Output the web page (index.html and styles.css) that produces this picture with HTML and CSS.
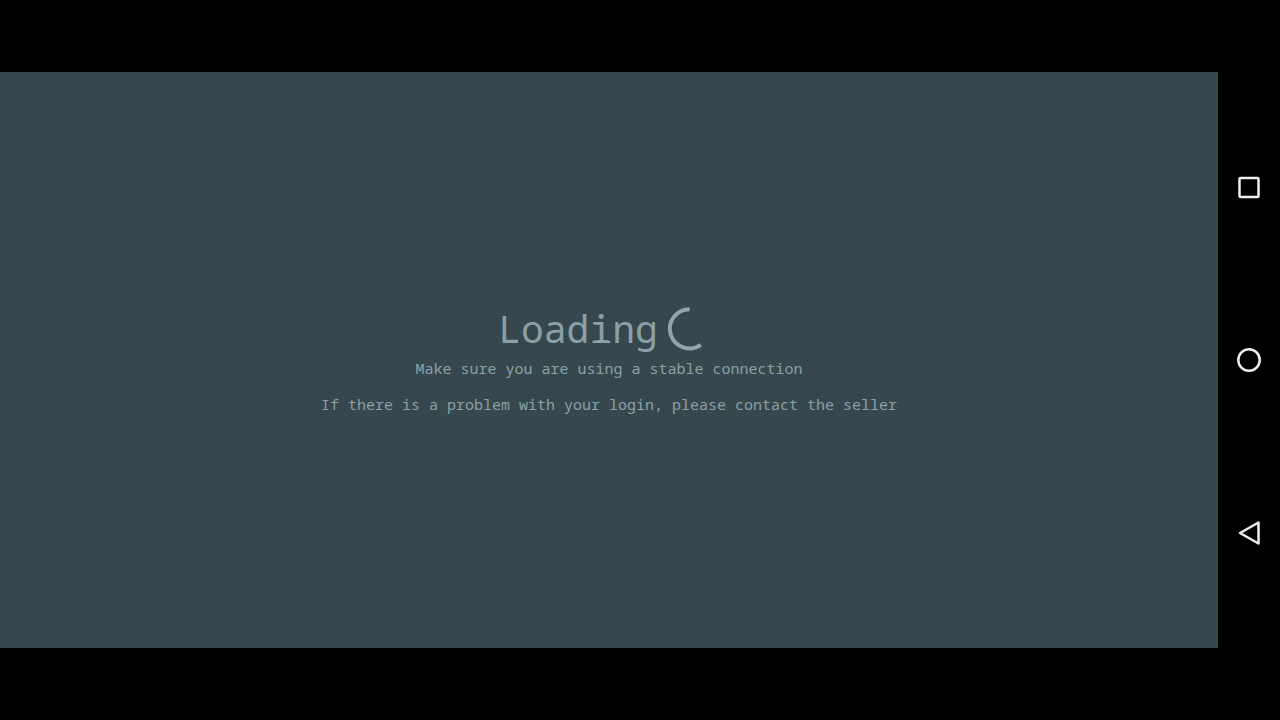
FILE: index.html
```html
<!DOCTYPE html>
<html lang="en">
<head>
<meta charset="utf-8">
<title>Loading</title>
<link rel="stylesheet" href="styles.css">
</head>
<body>
<main class="screen">
  <section class="status">
    <div class="heading">
      <h1 class="title">Loading</h1>
      <svg class="spinner" viewBox="0 0 44 44" aria-hidden="true"><path d="M23.600 3.200A19.600 19.600 0 1 0 34.800 38.800" /></svg>
    </div>
    <p class="message">Make sure you are using a stable connection</p>
    <p class="message">If there is a problem with your login, please contact the seller</p>
  </section>
</main>
<nav class="navbar" aria-label="System navigation">
  <button class="nav-button" aria-label="Recent apps"><svg class="icon" viewBox="0 0 28 28"><rect x="4.500" y="5" width="19" height="19" rx="1"/></svg></button>
  <button class="nav-button" aria-label="Home"><svg class="icon" viewBox="0 0 28 28"><circle cx="14" cy="14" r="10.700"/></svg></button>
  <button class="nav-button" aria-label="Back"><svg class="icon" viewBox="0 0 28 28"><path d="M23.500 3.500V24.500L5 14Z"/></svg></button>
</nav>
</body>
</html>
```
FILE: styles.css
```css
* { box-sizing: border-box; }
body {
  margin: 0;
  min-height: 100vh;
  padding: 72px 0;
  display: flex;
  background: #000;
  font-family: "Noto Sans Mono", "DejaVu Sans Mono", monospace;
}
.screen {
  flex: 1;
  display: flex;
  align-items: center;
  justify-content: center;
  background: #36484e;
  color: #8ba0a6;
}
.status { text-align: center; }
.heading {
  display: flex;
  align-items: center;
  justify-content: center;
  gap: 8px;
  padding: 8px 10px 0 0;
}
.title { margin: 0; font-size: 38px; font-weight: 400; line-height: 44px; }
.spinner { width: 44px; height: 44px; fill: none; stroke: #90a4ab; stroke-width: 4; overflow: visible; }
.message { margin: 0; font-size: 15px; line-height: 36px; }
.navbar {
  width: 62px;
  display: flex;
  flex-direction: column;
  justify-content: space-between;
  align-items: center;
  padding: 101px 0;
}
.nav-button { display: flex; padding: 0; border: 0; background: none; }
.icon { width: 28px; height: 28px; fill: none; stroke: #eee; stroke-width: 2.5; stroke-linejoin: round; }
```
